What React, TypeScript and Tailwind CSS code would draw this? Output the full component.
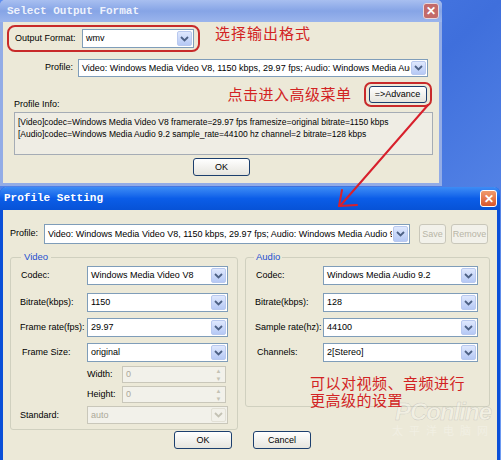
import React from 'react';

const font = { fontFamily: '"Liberation Sans", Arial, sans-serif' };
const cjk = { fontFamily: '"Noto Sans CJK SC", sans-serif' };
const mono = { fontFamily: '"Liberation Mono", "Courier New", monospace' };

function Chevron({ disabled }: { disabled?: boolean }) {
  return (
    <svg width="9" height="6" viewBox="0 0 9 6">
      <path d="M1 1 L4.5 4.5 L8 1" fill="none" stroke={disabled ? '#c4c2b4' : '#4d6185'} strokeWidth="1.8" />
    </svg>
  );
}

function Combo({ value, w, h = 19, disabled }: { value: string; w: number; h?: number; disabled?: boolean }) {
  return (
    <div
      className={`flex items-stretch border ${disabled ? 'border-[#c9c7ba] bg-[#f2f1ea] text-[#aca899]' : 'border-[#7f9db9] bg-white text-black'}`}
      style={{ width: w, height: h }}
    >
      <div className="flex flex-1 items-center overflow-hidden whitespace-nowrap pl-[3px] leading-none">{value}</div>
      <div
        className={`m-px flex w-[15px] items-center justify-center rounded-[2px] border ${disabled ? 'border-[#e2e0d5] bg-[#f2f1ea]' : 'border-[#b9c9ef] bg-gradient-to-b from-[#dfe8fd] to-[#b6c9f5]'}`}
      >
        <Chevron disabled={disabled} />
      </div>
    </div>
  );
}

function Spin({ w }: { w: number }) {
  return (
    <div className="flex h-[17px] items-stretch border border-[#c9c7ba] bg-[#f2f1ea] text-[#aca899]" style={{ width: w }}>
      <div className="flex flex-1 items-center pl-[3px] leading-none">0</div>
      <div className="flex w-[13px] flex-col text-[6px] leading-none text-[#c4c2b4]">
        <div className="flex flex-1 items-center justify-center">▲</div>
        <div className="flex flex-1 items-center justify-center">▼</div>
      </div>
    </div>
  );
}

function Btn({ label, w, h = 18, disabled }: { label: string; w: number; h?: number; disabled?: boolean }) {
  return (
    <div
      className={`flex items-center justify-center rounded-[3px] border leading-none ${disabled ? 'border-[#c9c7ba] bg-[#f2f1ea] text-[#b8b5a6]' : 'border-[#1c3f6e] bg-gradient-to-b from-white to-[#e6e5de] text-black'}`}
      style={{ width: w, height: h }}
    >
      {label}
    </div>
  );
}

function Row({ label, labelW, value, w, mt, pl = 0 }: { label: string; labelW: number; value: string; w: number; mt: number; pl?: number }) {
  return (
    <div className="flex items-center" style={{ marginTop: mt }}>
      <div className="whitespace-nowrap" style={{ width: labelW, paddingLeft: pl }}>{label}</div>
      <Combo value={value} w={w} />
    </div>
  );
}

export default function App() {
  return (
    <div
      className="relative h-[460px] w-[501px] overflow-hidden bg-gradient-to-br from-[#5d8df0] via-[#3f6fdc] to-[#6f9cf2] text-[9px]"
      style={font}
    >
      {/* Select Output Format window */}
      <div className="absolute left-0 top-0 h-[186px] w-[442px] rounded-t-[5px] border-x-[3px] border-b-[3px] border-[#93ace6] bg-[#ece9d8]">
        <div className="-mx-[3px] flex h-[22px] items-center justify-between rounded-t-[5px] bg-gradient-to-b from-[#a8bff0] via-[#86a4e6] to-[#9bb5ec] pl-[7px] pr-[3px]">
          <span className="text-[11px] font-bold text-[#eef2fc]" style={mono}>Select Output Format</span>
          <div className="flex h-[16px] w-[16px] items-center justify-center rounded-[3px] border border-[#e8d8dc] bg-[#c36a6a] text-[12px] font-bold leading-none text-white">✕</div>
        </div>
        <div className="flex flex-col">
          <div className="mt-[3px] flex items-start">
            <div className="ml-[4px] flex h-[27px] w-[193px] items-center rounded-[8px] border-2 border-[#c82a2a] pl-[6px]">
              <span className="w-[67px] whitespace-nowrap">Output Format:</span>
              <Combo value="wmv" w={112} />
            </div>
            <span className="ml-[15px] -mt-[3px] text-[15px] tracking-[1px] text-[#d22323]" style={cjk}>选择输出格式</span>
          </div>
          <div className="mt-[7px] flex items-center">
            <div className="w-[75px] pr-[5px] text-right">Profile:</div>
            <Combo value="Video: Windows Media Video V8, 1150 kbps, 29.97 fps;  Audio: Windows Media Audio 9.2" w={350} h={18} />
          </div>
          <div className="mt-[5px] flex h-[25px] items-end">
            <span className="mb-[-4px] ml-[11px] whitespace-nowrap">Profile Info:</span>
            <span className="mb-[2px] ml-[168px] text-[15px] tracking-[0.5px] text-[#d22323]" style={cjk}>点击进入高级菜单</span>
            <div className="ml-[12px] flex h-[25px] w-[68px] items-center justify-center rounded-[7px] border-2 border-[#c82a2a]">
              <Btn label="=>Advance" w={58} h={17} />
            </div>
          </div>
          <div className="ml-[11px] mt-[5px] h-[43px] w-[419px] border border-[#a5acb5] bg-[#efede4] px-[3px] pt-[3px] text-[8.5px] leading-[12px]">
            <div className="whitespace-nowrap">[Video]codec=Windows Media Video V8 framerate=29.97 fps framesize=original bitrate=1150 kbps</div>
            <div className="whitespace-nowrap">[Audio]codec=Windows Media Audio 9.2 sample_rate=44100 hz channel=2 bitrate=128 kbps</div>
          </div>
          <div className="ml-[190px] mt-[3px]">
            <Btn label="OK" w={57} />
          </div>
        </div>
      </div>

      {/* Profile Setting window */}
      <div className="absolute left-0 top-[187px] h-[276px] w-[500px] rounded-t-[6px] border-x-[3px] border-[#0a4fd8] bg-[#ece9d8]">
        <div className="-mx-[3px] flex h-[23px] items-center justify-between rounded-t-[6px] bg-gradient-to-b from-[#3d8cf5] via-[#0b5de8] to-[#0752d6] pl-[4px] pr-[3px]">
          <span className="text-[11px] font-bold text-white" style={mono}>Profile Setting</span>
          <div className="flex h-[17px] w-[17px] items-center justify-center rounded-[3px] border border-white bg-gradient-to-b from-[#f09a6c] to-[#d8542a] text-[12px] font-bold leading-none text-white">✕</div>
        </div>
        <div className="mt-[14px] flex items-center">
          <span className="ml-[7px] w-[34px]">Profile:</span>
          <Combo value="Video: Windows Media Video V8, 1150 kbps, 29.97 fps;  Audio: Windows Media Audio 9.2, 1" w={366} h={20} />
          <div className="ml-[9px]"><Btn label="Save" w={27} h={20} disabled /></div>
          <div className="ml-[5px]"><Btn label="Remove" w={37} h={20} disabled /></div>
        </div>
        <div className="mt-[6px] flex items-start">
          <fieldset className="ml-[7px] h-[180px] w-[228px] rounded-[3px] border border-[#d0d0bf] pl-[9px]">
            <legend className="ml-[1px] px-[3px] text-[9.5px] text-[#1e4fd0]">Video</legend>
            <Row label="Codec:" labelW={67} value="Windows Media Video V8" w={141} mt={2} pl={1} />
            <Row label="Bitrate(kbps):" labelW={67} value="1150" w={141} mt={8} />
            <Row label="Frame rate(fps):" labelW={67} value="29.97" w={141} mt={6} />
            <Row label="Frame Size:" labelW={67} value="original" w={141} mt={6} pl={2} />
            <div className="mt-[4px] flex items-center">
              <div className="w-[102px] pl-[67px]">Width:</div>
              <Spin w={104} />
            </div>
            <div className="mt-[3px] flex items-center">
              <div className="w-[102px] pl-[67px]">Height:</div>
              <Spin w={104} />
            </div>
            <div className="mt-[3px] flex items-center">
              <div className="w-[67px]">Standard:</div>
              <Combo value="auto" w={141} h={18} disabled />
            </div>
          </fieldset>
          <fieldset className="ml-[7px] h-[157px] w-[245px] rounded-[3px] border border-[#d0d0bf] pl-[9px]">
            <legend className="-ml-[1px] px-[2px] text-[9.5px] text-[#1e4fd0]">Audio</legend>
            <Row label="Codec:" labelW={68} value="Windows Media Audio 9.2" w={155} mt={2} pl={1} />
            <Row label="Bitrate(kbps):" labelW={68} value="128" w={155} mt={8} />
            <Row label="Sample rate(hz):" labelW={68} value="44100" w={155} mt={6} />
            <Row label="Channels:" labelW={68} value="2[Stereo]" w={155} mt={6} pl={2} />
          </fieldset>
        </div>
        <div className="mt-[1px] flex">
          <div className="ml-[171px]"><Btn label="OK" w={58} /></div>
          <div className="ml-[21px]"><Btn label="Cancel" w={58} /></div>
        </div>
      </div>

      {/* annotations */}
      <div className="absolute left-[392px] top-[400px] text-center leading-none text-white/30">
        <div className="text-[24px] font-bold italic tracking-[-1px]" style={{ WebkitTextStroke: '0.5px rgba(120,120,120,0.3)' }}>PConline</div>
        <div className="mt-[1px] text-[11px] tracking-[6px]" style={cjk}>太平洋电脑网</div>
      </div>
      <div className="absolute left-[310px] top-[374px] text-[15px] leading-[17px] tracking-[0.5px] text-[#d22323]" style={cjk}>
        <div>可以对视频、音频进行</div>
        <div>更高级的设置</div>
      </div>
      <svg className="absolute left-0 top-0" width="501" height="460">
        <g stroke="#d8202c" strokeWidth="2" fill="none" strokeLinecap="round">
          <path d="M428 105 L340 206" />
          <path d="M339 206 L342 190" />
          <path d="M339 206 L357 205" />
        </g>
      </svg>
    </div>
  );
}
